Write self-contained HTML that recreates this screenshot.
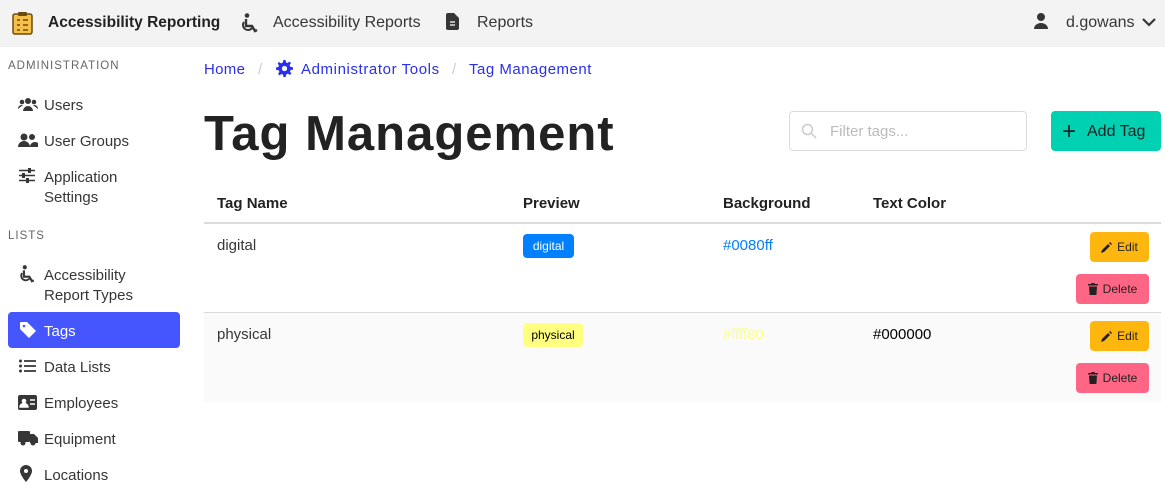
<!DOCTYPE html><html><head><style>
*{box-sizing:border-box;margin:0;padding:0}
body{width:1165px;height:496px;background:#fff;font-family:"Liberation Sans",sans-serif;color:#363636;position:relative;overflow:hidden;font-size:15px}
.top{position:absolute;left:0;top:0;width:1165px;height:47px;background:#f3f3f3}
.a{position:absolute;white-space:nowrap}
.side .a{font-size:15px;color:#363636}
.ico{position:absolute;fill:#363636}
.side .hdr{font-size:11.5px;letter-spacing:1px;color:#666}
.bc{letter-spacing:0.3px}
.btn{position:absolute;border-radius:4px;font-size:12px;color:#222;display:flex;align-items:center;justify-content:center;gap:5px}
</style></head><body>
<div class="top"></div>
<svg class="ico" style="left:12px;top:11px" width="21" height="24" viewBox="0 0 21 24"><rect x="1" y="3" width="19" height="20" rx="2" fill="#f5c04a" stroke="#6b4c10" stroke-width="1.5"/><rect x="6" y="1" width="9" height="4" rx="1" fill="#6b4c10"/><path d="M5 9h3M5 14h3M5 19h3M11 9h5M11 14h5M11 19h5" stroke="#6b4c10" stroke-width="1.5"/></svg>
<div class="a" style="left:48px;top:14px;font-weight:bold;font-size:15.5px;color:#222">Accessibility Reporting</div>
<svg class="ico" style="left:241px;top:13px" width="18" height="20" viewBox="0 0 18 20"><circle cx="6" cy="2.5" r="2.3"/><path d="M5 6v7h6l3 5 2-1" stroke="#363636" stroke-width="2.4" fill="none"/><path d="M3 9a5 5 0 1 0 8 6" stroke="#363636" stroke-width="2" fill="none"/></svg>
<div class="a" style="left:273px;top:14px;font-size:16px">Accessibility Reports</div>
<svg class="ico" style="left:446px;top:13px" width="13" height="17" viewBox="0 0 13 17"><path d="M0 2a2 2 0 0 1 2-2h6l5 5v10a2 2 0 0 1-2 2H2a2 2 0 0 1-2-2z"/><path d="M4 9h5M4 12h5" stroke="#fff" stroke-width="1.3"/></svg>
<div class="a" style="left:477px;top:14px;font-size:16px">Reports</div>
<svg class="ico" style="left:1034px;top:13px" width="14" height="16" viewBox="0 0 14 16"><circle cx="7" cy="4" r="4"/><path d="M0 16a7 6 0 0 1 14 0z"/></svg>
<div class="a" style="left:1066px;top:14px;font-size:16px">d.gowans</div>
<svg class="a" style="left:1141px;top:17px" width="16" height="10" viewBox="0 0 16 10"><path d="M2 2l6 6 6-6" stroke="#363636" stroke-width="2.2" fill="none"/></svg>

<div class="side">
<div class="a hdr" style="left:8px;top:60px">ADMINISTRATION</div>
<svg class="ico" style="left:18px;top:97px" width="20" height="14" viewBox="0 0 20 14"><circle cx="10" cy="4" r="3"/><circle cx="4" cy="5" r="2.3"/><circle cx="16" cy="5" r="2.3"/><path d="M5 14a5 5 0 0 1 10 0zM0 12a4 4 0 0 1 5-4zM20 12a4 4 0 0 0-5-4z"/></svg>
<div class="a" style="left:44px;top:97px">Users</div>
<svg class="ico" style="left:18px;top:133px" width="20" height="14" viewBox="0 0 20 14"><circle cx="6" cy="4" r="3.5"/><circle cx="14" cy="4" r="3"/><path d="M0 14a6 6 0 0 1 12 0zM12 14a5 5 0 0 1 8-4v4z"/></svg>
<div class="a" style="left:44px;top:133px">User Groups</div>
<svg class="ico" style="left:19px;top:168px" width="16" height="15" viewBox="0 0 16 15"><path d="M0 2.5h16M0 7.5h16M0 12.5h16" stroke="#363636" stroke-width="1.6"/><rect x="9" y="0" width="3" height="5"/><rect x="3" y="5" width="3" height="5"/><rect x="7" y="10" width="3" height="5"/></svg>
<div class="a" style="left:44px;top:169px">Application</div>
<div class="a" style="left:44px;top:189px">Settings</div>
<div class="a hdr" style="left:8px;top:230px">LISTS</div>
<svg class="ico" style="left:19px;top:265px" width="17" height="18" viewBox="0 0 18 20"><circle cx="6" cy="2.5" r="2.3"/><path d="M5 6v7h6l3 5 2-1" stroke="#363636" stroke-width="2.4" fill="none"/><path d="M3 9a5 5 0 1 0 8 6" stroke="#363636" stroke-width="2" fill="none"/></svg>
<div class="a" style="left:44px;top:267px">Accessibility</div>
<div class="a" style="left:44px;top:287px">Report Types</div>
<div class="a" style="left:8px;top:312px;width:172px;height:36px;background:#4656ff;border-radius:4px"></div>
<svg class="a" style="left:20px;top:322px" width="16" height="16" viewBox="0 0 16 16"><path d="M0 1a1 1 0 0 1 1-1h6l9 9-7 7-9-9z" fill="#fff"/><circle cx="4" cy="4" r="1.3" fill="#4656ff"/></svg>
<div class="a" style="left:44px;top:323px;color:#fff">Tags</div>
<svg class="ico" style="left:19px;top:359px" width="17" height="14" viewBox="0 0 17 14"><circle cx="1.5" cy="2" r="1.5"/><circle cx="1.5" cy="7" r="1.5"/><circle cx="1.5" cy="12" r="1.5"/><path d="M5 2h12M5 7h12M5 12h12" stroke="#363636" stroke-width="1.8"/></svg>
<div class="a" style="left:44px;top:359px">Data Lists</div>
<svg class="ico" style="left:18px;top:395px" width="19" height="15" viewBox="0 0 19 15"><rect width="19" height="15" rx="2"/><circle cx="6" cy="6" r="2.3" fill="#fff"/><path d="M2 12a4 3.5 0 0 1 8 0z M12 5h5M12 9h5" fill="#fff" stroke="#fff" stroke-width="1.4"/></svg>
<div class="a" style="left:44px;top:395px">Employees</div>
<svg class="ico" style="left:18px;top:431px" width="20" height="15" viewBox="0 0 20 15"><rect x="0" y="0" width="12" height="11" rx="1"/><path d="M12 3h4l4 4v5h-8z"/><circle cx="5" cy="12" r="2.5"/><circle cx="15" cy="12" r="2.5"/></svg>
<div class="a" style="left:44px;top:431px">Equipment</div>
<svg class="ico" style="left:20px;top:465px" width="12" height="17" viewBox="0 0 12 17"><path d="M6 0a6 6 0 0 1 6 6c0 4-6 11-6 11S0 10 0 6a6 6 0 0 1 6-6z"/><circle cx="6" cy="6" r="2" fill="#fff"/></svg>
<div class="a" style="left:44px;top:467px">Locations</div>
</div>

<div class="a bc" style="left:204px;top:61px;font-size:15px;color:#2a2eef">Home</div>
<div class="a" style="left:258px;top:61px;color:#ccc">/</div>
<svg class="a" style="left:276px;top:60px" width="17" height="17" viewBox="0 0 16 16"><path fill="#2a2eef" d="M7 0h2l.4 2.2 1.5.6 1.8-1.3 1.4 1.4-1.3 1.8.6 1.5L16 7v2l-2.2.4-.6 1.5 1.3 1.8-1.4 1.4-1.8-1.3-1.5.6L9 16H7l-.4-2.2-1.5-.6-1.8 1.3-1.4-1.4 1.3-1.8-.6-1.5L0 9V7l2.2-.4.6-1.5L1.5 3.3l1.4-1.4 1.8 1.3 1.5-.6z"/><circle cx="8" cy="8" r="2.5" fill="#fff"/></svg>
<div class="a bc" style="left:301px;top:61px;color:#2a2eef;letter-spacing:0.6px">Administrator Tools</div>
<div class="a" style="left:452px;top:61px;color:#ccc">/</div>
<div class="a bc" style="left:469px;top:61px;color:#2a2eef;letter-spacing:0.5px">Tag Management</div>
<div class="a" style="left:204px;top:106px;font-size:49px;font-weight:bold;color:#222;letter-spacing:1px">Tag Management</div>
<div class="a" style="left:789px;top:111px;width:238px;height:40px;border:1px solid #dbdbdb;border-radius:4px"></div>
<svg class="a" style="left:801px;top:123px" width="16" height="16" viewBox="0 0 16 16"><circle cx="6.5" cy="6.5" r="5" stroke="#ccc" stroke-width="1.5" fill="none"/><path d="M10 10l5 5" stroke="#ccc" stroke-width="1.5"/></svg>
<div class="a" style="left:830px;top:123px;color:#bbb">Filter tags...</div>
<div class="a" style="left:1051px;top:111px;width:110px;height:40px;background:#00d1b2;border-radius:4px"></div>
<div class="a" style="left:1062px;top:118px;font-size:24px;color:#222">+</div>
<div class="a" style="left:1087px;top:123px;font-size:16px;color:#222">Add Tag</div>

<div class="a" style="left:204px;top:313px;width:957px;height:89px;background:#fafafa"></div>
<div class="a" style="left:204px;top:222px;width:957px;height:2px;background:#dbdbdb"></div>
<div class="a" style="left:204px;top:312px;width:957px;height:1px;background:#dbdbdb"></div>
<div class="a" style="left:217px;top:195px;font-weight:bold;color:#222">Tag Name</div>
<div class="a" style="left:523px;top:195px;font-weight:bold;color:#222">Preview</div>
<div class="a" style="left:723px;top:195px;font-weight:bold;color:#222">Background</div>
<div class="a" style="left:873px;top:195px;font-weight:bold;color:#222">Text Color</div>
<div class="a" style="left:217px;top:237px">digital</div>
<div class="a" style="left:523px;top:234px;width:51px;height:24px;background:#0080ff;border-radius:4px;color:#fff;font-size:12px;text-align:center;line-height:24px">digital</div>
<div class="a" style="left:723px;top:237px;color:#0080ff">#0080ff</div>
<div class="a" style="left:217px;top:326px">physical</div>
<div class="a" style="left:523px;top:323px;width:60px;height:24px;background:#ffff80;border-radius:4px;color:#000;font-size:12px;text-align:center;line-height:24px">physical</div>
<div class="a" style="left:723px;top:326px;color:#ffff80">#ffff80</div>
<div class="a" style="left:873px;top:326px;color:#000">#000000</div>
<div class="btn" style="left:1090px;top:232px;width:59px;height:30px;background:#ffb70f"><svg width="11" height="11" viewBox="0 0 11 11"><path d="M0 11l1-3 6-6 2 2-6 6zM8 1l1-1 2 2-1 1z" fill="#222"/></svg>Edit</div>
<div class="btn" style="left:1076px;top:274px;width:73px;height:30px;background:#ff6685"><svg width="10" height="12" viewBox="0 0 10 12"><path d="M0 1h3l.5-1h3l.5 1h3v1.5H0zM1 3.5h8l-.6 8.5H1.6z" fill="#222"/></svg>Delete</div>
<div class="btn" style="left:1090px;top:321px;width:59px;height:30px;background:#ffb70f"><svg width="11" height="11" viewBox="0 0 11 11"><path d="M0 11l1-3 6-6 2 2-6 6zM8 1l1-1 2 2-1 1z" fill="#222"/></svg>Edit</div>
<div class="btn" style="left:1076px;top:363px;width:73px;height:30px;background:#ff6685"><svg width="10" height="12" viewBox="0 0 10 12"><path d="M0 1h3l.5-1h3l.5 1h3v1.5H0zM1 3.5h8l-.6 8.5H1.6z" fill="#222"/></svg>Delete</div>
</body></html>
